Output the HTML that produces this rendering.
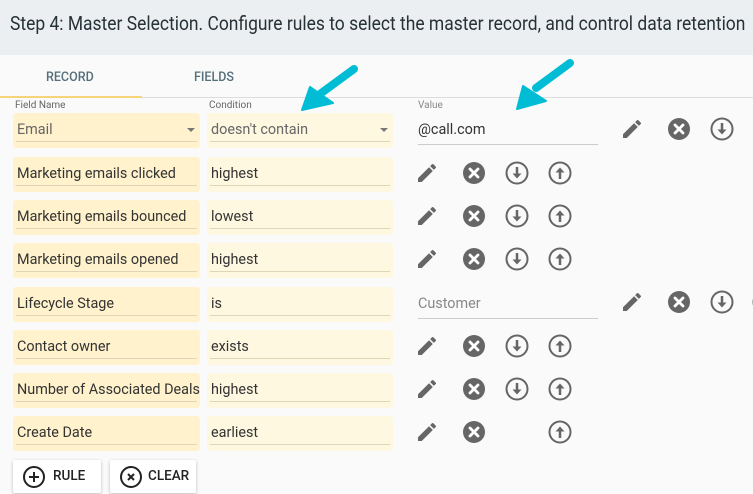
<!DOCTYPE html>
<html><head><style>
body{margin:0;width:753px;height:494px;overflow:hidden;background:#fafafa;font-family:"Roboto","Liberation Sans",sans-serif;position:relative}
.hdr{position:absolute;left:0;top:0;width:753px;height:55px;background:#eceff1;overflow:hidden}
.hdr span{position:absolute;left:10px;top:12px;font-size:19.5px;color:#263238;white-space:nowrap;transform:scaleX(0.895);transform-origin:left}
.tab{position:absolute;top:70px;font-size:12.5px;color:#546e7a;font-weight:500}
.line{position:absolute;top:97px;height:1px;left:0;width:753px;background:#ddd}
.yl{position:absolute;top:96px;height:2px;left:0;width:142px;background:#f7d37a}
.lbl{position:absolute;top:100px;font-size:10px;color:#666}
.box{position:absolute;height:35px;border-radius:3px}
.f{left:13px;width:187px;background:#fff2cc}
.c{left:207px;width:186px;background:#fff8e1}
.box span{position:absolute;left:4px;top:8px;font-size:14.4px;color:#333;white-space:nowrap}
.box i{position:absolute;left:3px;right:3px;bottom:6px;height:1px;background:#dfd6b8}
.dd{position:absolute;right:5px;top:15px;width:0;height:0;border-left:4px solid transparent;border-right:4px solid transparent;border-top:4px solid #777}
.val{position:absolute;left:418px;width:180px;font-size:14.4px;border-bottom:1px solid #ccc;padding-bottom:6px}
svg.ic{position:absolute;width:24px;height:24px}
.btn{position:absolute;top:460px;height:33px;background:#fff;box-shadow:0 1px 3px rgba(0,0,0,.25);border-radius:2px;font-size:13.5px;color:#222;font-weight:500}
.btn svg{position:absolute;left:9px;top:5px;width:24px;height:24px}
.btn span{position:absolute;left:40px;top:8px}
</style></head><body>
<svg width="0" height="0" style="position:absolute">
<defs>
<symbol id="pen" viewBox="0 0 24 24"><path fill="#666" d="M3 17.25V21h3.75L17.81 9.940l-3.75-3.75L3 17.25zM20.71 7.04a1 1 0 000-1.41l-2.34-2.34a1 1 0 00-1.41 0l-1.83 1.83 3.75 3.75 1.830-1.83z"/></symbol>
<symbol id="x" viewBox="0 0 24 24"><circle cx="12" cy="12" r="11" fill="#666"/><path d="M8 8l8 8M16 8l-8 8" stroke="#fff" stroke-width="2.8" stroke-linecap="round"/></symbol>
<symbol id="dn" viewBox="0 0 24 24"><circle cx="12" cy="12" r="10.5" fill="none" stroke="#666" stroke-width="2"/><path d="M12 6v9" stroke="#666" stroke-width="2.5"/><path d="M7.5 12.5L12 17.5 16.5 12.5z" fill="#666"/></symbol>
<symbol id="up" viewBox="0 0 24 24"><circle cx="12" cy="12" r="10.5" fill="none" stroke="#666" stroke-width="2"/><path d="M12 18V9" stroke="#666" stroke-width="2.5"/><path d="M7.5 11.5L12 6.5 16.5 11.5z" fill="#666"/></symbol>
</defs></svg>
<div class="hdr"><span>Step 4: Master Selection. Configure rules to select the master record, and control data retention</span></div>
<div class="tab" style="left:46px">RECORD</div>
<div class="tab" style="left:194px">FIELDS</div>
<div class="line"></div><div class="yl"></div>
<div class="lbl" style="left:15px">Field Name</div>
<div class="lbl" style="left:209px">Condition</div>
<div class="lbl" style="left:418px;color:#888">Value</div>

<div class="box f" style="top:113px"><span style="color:#666">Email</span><div class="dd"></div><i></i></div>
<div class="box c" style="top:113px"><span style="color:#666">doesn't contain</span><div class="dd"></div><i></i></div>
<div class="val" style="top:121px;color:#333">@call.com</div>
<svg class="ic" style="left:620px;top:117px"><use href="#pen"/></svg>
<svg class="ic" style="left:667px;top:117px"><use href="#x"/></svg>
<svg class="ic" style="left:710px;top:117px"><use href="#dn"/></svg>

<div class="box f" style="top:157px"><span>Marketing emails clicked</span><i></i></div>
<div class="box c" style="top:157px"><span>highest</span><i></i></div>
<div class="box f" style="top:200px"><span>Marketing emails bounced</span><i></i></div>
<div class="box c" style="top:200px"><span>lowest</span><i></i></div>
<div class="box f" style="top:243px"><span>Marketing emails opened</span><i></i></div>
<div class="box c" style="top:243px"><span>highest</span><i></i></div>
<div class="box f" style="top:287px"><span>Lifecycle Stage</span><i></i></div>
<div class="box c" style="top:287px"><span>is</span><i></i></div>
<div class="val" style="top:295px;color:#888">Customer</div>
<svg class="ic" style="left:620px;top:290px"><use href="#pen"/></svg>
<svg class="ic" style="left:667px;top:290px"><use href="#x"/></svg>
<svg class="ic" style="left:710px;top:290px"><use href="#dn"/></svg>
<svg class="ic" style="left:752px;top:290px"><use href="#up"/></svg>
<div class="box f" style="top:330px"><span>Contact owner</span><i></i></div>
<div class="box c" style="top:330px"><span>exists</span><i></i></div>
<div class="box f" style="top:373px;overflow:hidden"><span>Number of Associated Deals</span><i></i></div>
<div class="box c" style="top:373px"><span>highest</span><i></i></div>
<div class="box f" style="top:416px"><span>Create Date</span><i></i></div>
<div class="box c" style="top:416px"><span>earliest</span><i></i></div>

<svg class="ic" style="left:415px;top:161px"><use href="#pen"/></svg><svg class="ic" style="left:462px;top:161px"><use href="#x"/></svg><svg class="ic" style="left:505px;top:161px"><use href="#dn"/></svg><svg class="ic" style="left:548px;top:161px"><use href="#up"/></svg>
<svg class="ic" style="left:415px;top:204px"><use href="#pen"/></svg><svg class="ic" style="left:462px;top:204px"><use href="#x"/></svg><svg class="ic" style="left:505px;top:204px"><use href="#dn"/></svg><svg class="ic" style="left:548px;top:204px"><use href="#up"/></svg>
<svg class="ic" style="left:415px;top:247px"><use href="#pen"/></svg><svg class="ic" style="left:462px;top:247px"><use href="#x"/></svg><svg class="ic" style="left:505px;top:247px"><use href="#dn"/></svg><svg class="ic" style="left:548px;top:247px"><use href="#up"/></svg>
<svg class="ic" style="left:415px;top:334px"><use href="#pen"/></svg><svg class="ic" style="left:462px;top:334px"><use href="#x"/></svg><svg class="ic" style="left:505px;top:334px"><use href="#dn"/></svg><svg class="ic" style="left:548px;top:334px"><use href="#up"/></svg>
<svg class="ic" style="left:415px;top:377px"><use href="#pen"/></svg><svg class="ic" style="left:462px;top:377px"><use href="#x"/></svg><svg class="ic" style="left:505px;top:377px"><use href="#dn"/></svg><svg class="ic" style="left:548px;top:377px"><use href="#up"/></svg>
<svg class="ic" style="left:415px;top:420px"><use href="#pen"/></svg><svg class="ic" style="left:462px;top:420px"><use href="#x"/></svg><svg class="ic" style="left:548px;top:420px"><use href="#up"/></svg>

<div class="btn" style="left:13px;width:88px"><svg viewBox="0 0 24 24"><circle cx="12" cy="12" r="10" fill="none" stroke="#222" stroke-width="2"/><path d="M12 7v10M7 12h10" stroke="#222" stroke-width="2"/></svg><span>RULE</span></div>
<div class="btn" style="left:110px;width:86px"><svg viewBox="0 0 24 24"><circle cx="12" cy="12" r="10" fill="none" stroke="#222" stroke-width="2"/><path d="M9 9l6 6M15 9l-6 6" stroke="#222" stroke-width="2"/></svg><span style="left:38px">CLEAR</span></div>

<svg style="position:absolute;left:0;top:0" width="753" height="494">
<g fill="#00bcd4" stroke="#00bcd4" stroke-linecap="round" stroke-linejoin="round">
<line x1="354" y1="69" x2="320" y2="94" stroke-width="8"/>
<polygon points="302,110 310,87 333,103" stroke-width="2"/>
<line x1="570" y1="63" x2="536" y2="88" stroke-width="8"/>
<polygon points="517,109 523,86 546,101" stroke-width="2"/>
</g></svg>
</body></html>
